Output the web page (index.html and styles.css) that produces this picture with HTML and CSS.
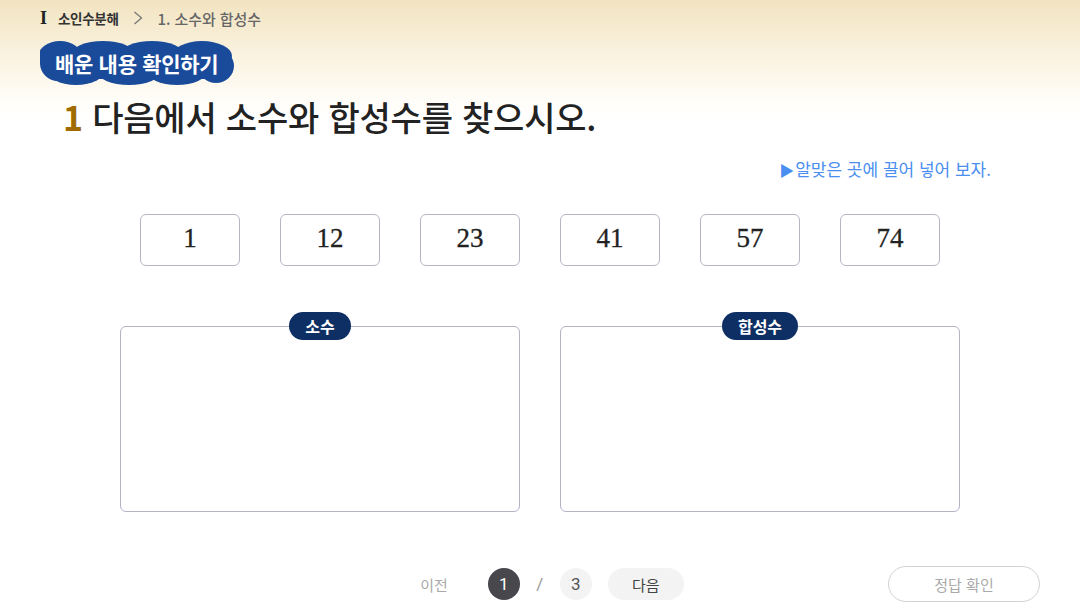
FILE: index.html
```html
<!DOCTYPE html>
<html lang="ko">
<head>
<meta charset="utf-8">
<link rel="stylesheet" href="styles.css">
</head>
<body>
<div class="page">
  <header class="top">
    <nav class="crumbs">
      <span class="roman">I</span>
      <span class="crumb-main">소인수분해</span>
      <svg class="chev" width="12" height="16" viewBox="0 0 12 16"><path d="M2.5 2 L9.5 8 L2.5 14" fill="none" stroke="#777" stroke-width="1.3"/></svg>
      <span class="crumb-sub">1. 소수와 합성수</span>
    </nav>
    <div class="badge">
      <svg class="cloud" width="194" height="44" viewBox="0 0 194 44">
        <g fill="#1a4b9b">
          <rect x="16" y="6" width="162" height="32"/>
          <circle cx="18" cy="22" r="18"/>
          <ellipse cx="20" cy="16" rx="22" ry="16"/>
          <ellipse cx="63" cy="14" rx="32" ry="14"/>
          <ellipse cx="112" cy="14" rx="32" ry="14"/>
          <ellipse cx="162" cy="15" rx="30" ry="15"/>
          <ellipse cx="36" cy="28" rx="30" ry="16"/>
          <ellipse cx="89" cy="30" rx="32" ry="14"/>
          <ellipse cx="137" cy="30" rx="30" ry="14"/>
          <ellipse cx="176" cy="25" rx="18" ry="17"/>
        </g>
      </svg>
      <span class="badge-text">배운 내용 확인하기</span>
    </div>
  </header>

  <h1 class="question"><span class="qnum">1</span> 다음에서 소수와 합성수를 찾으시오.</h1>

  <p class="hint"><span class="tri">▶</span>알맞은 곳에 끌어 넣어 보자.</p>

  <div class="cards">
    <div class="card">1</div>
    <div class="card">12</div>
    <div class="card">23</div>
    <div class="card">41</div>
    <div class="card">57</div>
    <div class="card">74</div>
  </div>

  <div class="zones">
    <section class="zone">
      <div class="zone-label">소수</div>
      <div class="zone-box"></div>
    </section>
    <section class="zone">
      <div class="zone-label">합성수</div>
      <div class="zone-box"></div>
    </section>
  </div>

  <footer class="bottom">
    <div class="pager">
      <span class="prev">이전</span>
      <span class="pg pg-cur">1</span>
      <span class="slash">/</span>
      <span class="pg pg-total">3</span>
      <span class="next">다음</span>
    </div>
    <button class="check">정답 확인</button>
  </footer>
</div>
</body>
</html>
```

FILE: styles.css
```css
* { box-sizing: border-box; }
html, body { margin: 0; padding: 0; }
body {
  width: 1080px;
  height: 608px;
  overflow: hidden;
  font-family: "Noto Sans CJK KR", "Noto Sans", sans-serif;
  color: #222;
  background: linear-gradient(180deg, #f2e4c1 0px, #f9f1dd 50px, #fffdf8 100px, #ffffff 120px);
}
.page { width: 1080px; height: 608px; display: flex; flex-direction: column; }

.top { padding: 8px 0 0 40px; }
.crumbs { display: flex; align-items: center; height: 20px; }
.roman {
  font-family: "Liberation Serif", serif;
  font-weight: 700;
  font-size: 18px;
  color: #222;
  width: 9px;
  line-height: 20px;
}
.crumb-main { margin-left: 9px; font-size: 13.5px; font-weight: 700; color: #333; letter-spacing: -0.3px; }
.chev { margin-left: 13px; }
.crumb-sub { margin-left: 14px; font-size: 15px; font-weight: 500; color: #666; letter-spacing: -0.1px; }

.badge { position: relative; width: 194px; height: 44px; margin-top: 13px; display: flex; align-items: center; }
.cloud { position: absolute; left: 0; top: 0; }
.badge-text { position: relative; margin-left: 15px; color: #fff; font-size: 21px; font-weight: 700; letter-spacing: -0.3px; line-height: 44px; }

.question {
  margin: 11px 0 0 63px;
  font-size: 34px;
  font-weight: 500;
  line-height: 42px;
  color: #222;
  letter-spacing: -0.2px;
}
.qnum { color: #a06c00; font-weight: 700; }

.hint {
  margin: 20px 89px 0 0;
  text-align: right;
  font-size: 17px;
  line-height: 22px;
  color: #4a8ef0;
}
.tri { font-size: 15px; margin-right: 1px; }

.cards { display: flex; justify-content: center; gap: 40px; margin-top: 33px; }
.card {
  width: 100px;
  height: 52px;
  padding-bottom: 3px;
  border: 1px solid #b4b7c2;
  border-radius: 6px;
  background: #fff;
  display: flex;
  align-items: center;
  justify-content: center;
  font-family: "Liberation Serif", serif;
  font-size: 27px;
  color: #222;
  -webkit-text-stroke: 0.3px #222;
}

.zones { display: flex; justify-content: center; gap: 40px; margin-top: 46px; }
.zone { width: 400px; display: flex; flex-direction: column; align-items: center; }
.zone-label {
  height: 28px;
  padding: 0 16px;
  border-radius: 14px;
  background: #0e2f63;
  color: #fff;
  font-size: 16px;
  font-weight: 700;
  line-height: 28px;
  position: relative;
  z-index: 1;
}
.zone-box {
  width: 400px;
  height: 186px;
  margin-top: -14px;
  border: 1px solid #b2b4c4;
  border-radius: 6px;
  background: #fff;
}

.bottom { position: relative; display: flex; justify-content: center; margin-top: 54px; height: 36px; }
.pager { display: flex; align-items: center; height: 36px; margin-left: 24px; }
.prev { font-size: 15px; color: #aaa; margin-right: 40px; }
.pg { width: 32px; height: 32px; border-radius: 50%; display: flex; align-items: center; justify-content: center; font-size: 17px; font-family: "Roboto", sans-serif; }
.pg-cur { background: #47474c; color: #fff; }
.pg-total { background: #f3f3f4; color: #555; }
.slash { width: 40px; text-align: center; color: #999; font-size: 17px; font-family: "Roboto", sans-serif; }
.next {
  margin-left: 16px;
  width: 76px;
  height: 32px;
  border-radius: 16px;
  background: #f3f3f4;
  color: #444;
  font-size: 15px;
  display: flex;
  align-items: center;
  justify-content: center;
}
.check {
  position: absolute;
  right: 40px;
  top: 0;
  width: 152px;
  height: 36px;
  border: 1px solid #d2d2d2;
  border-radius: 18px;
  background: #fff;
  color: #aaa;
  font-family: "Noto Sans CJK KR", sans-serif;
  font-size: 15px;
}
```
